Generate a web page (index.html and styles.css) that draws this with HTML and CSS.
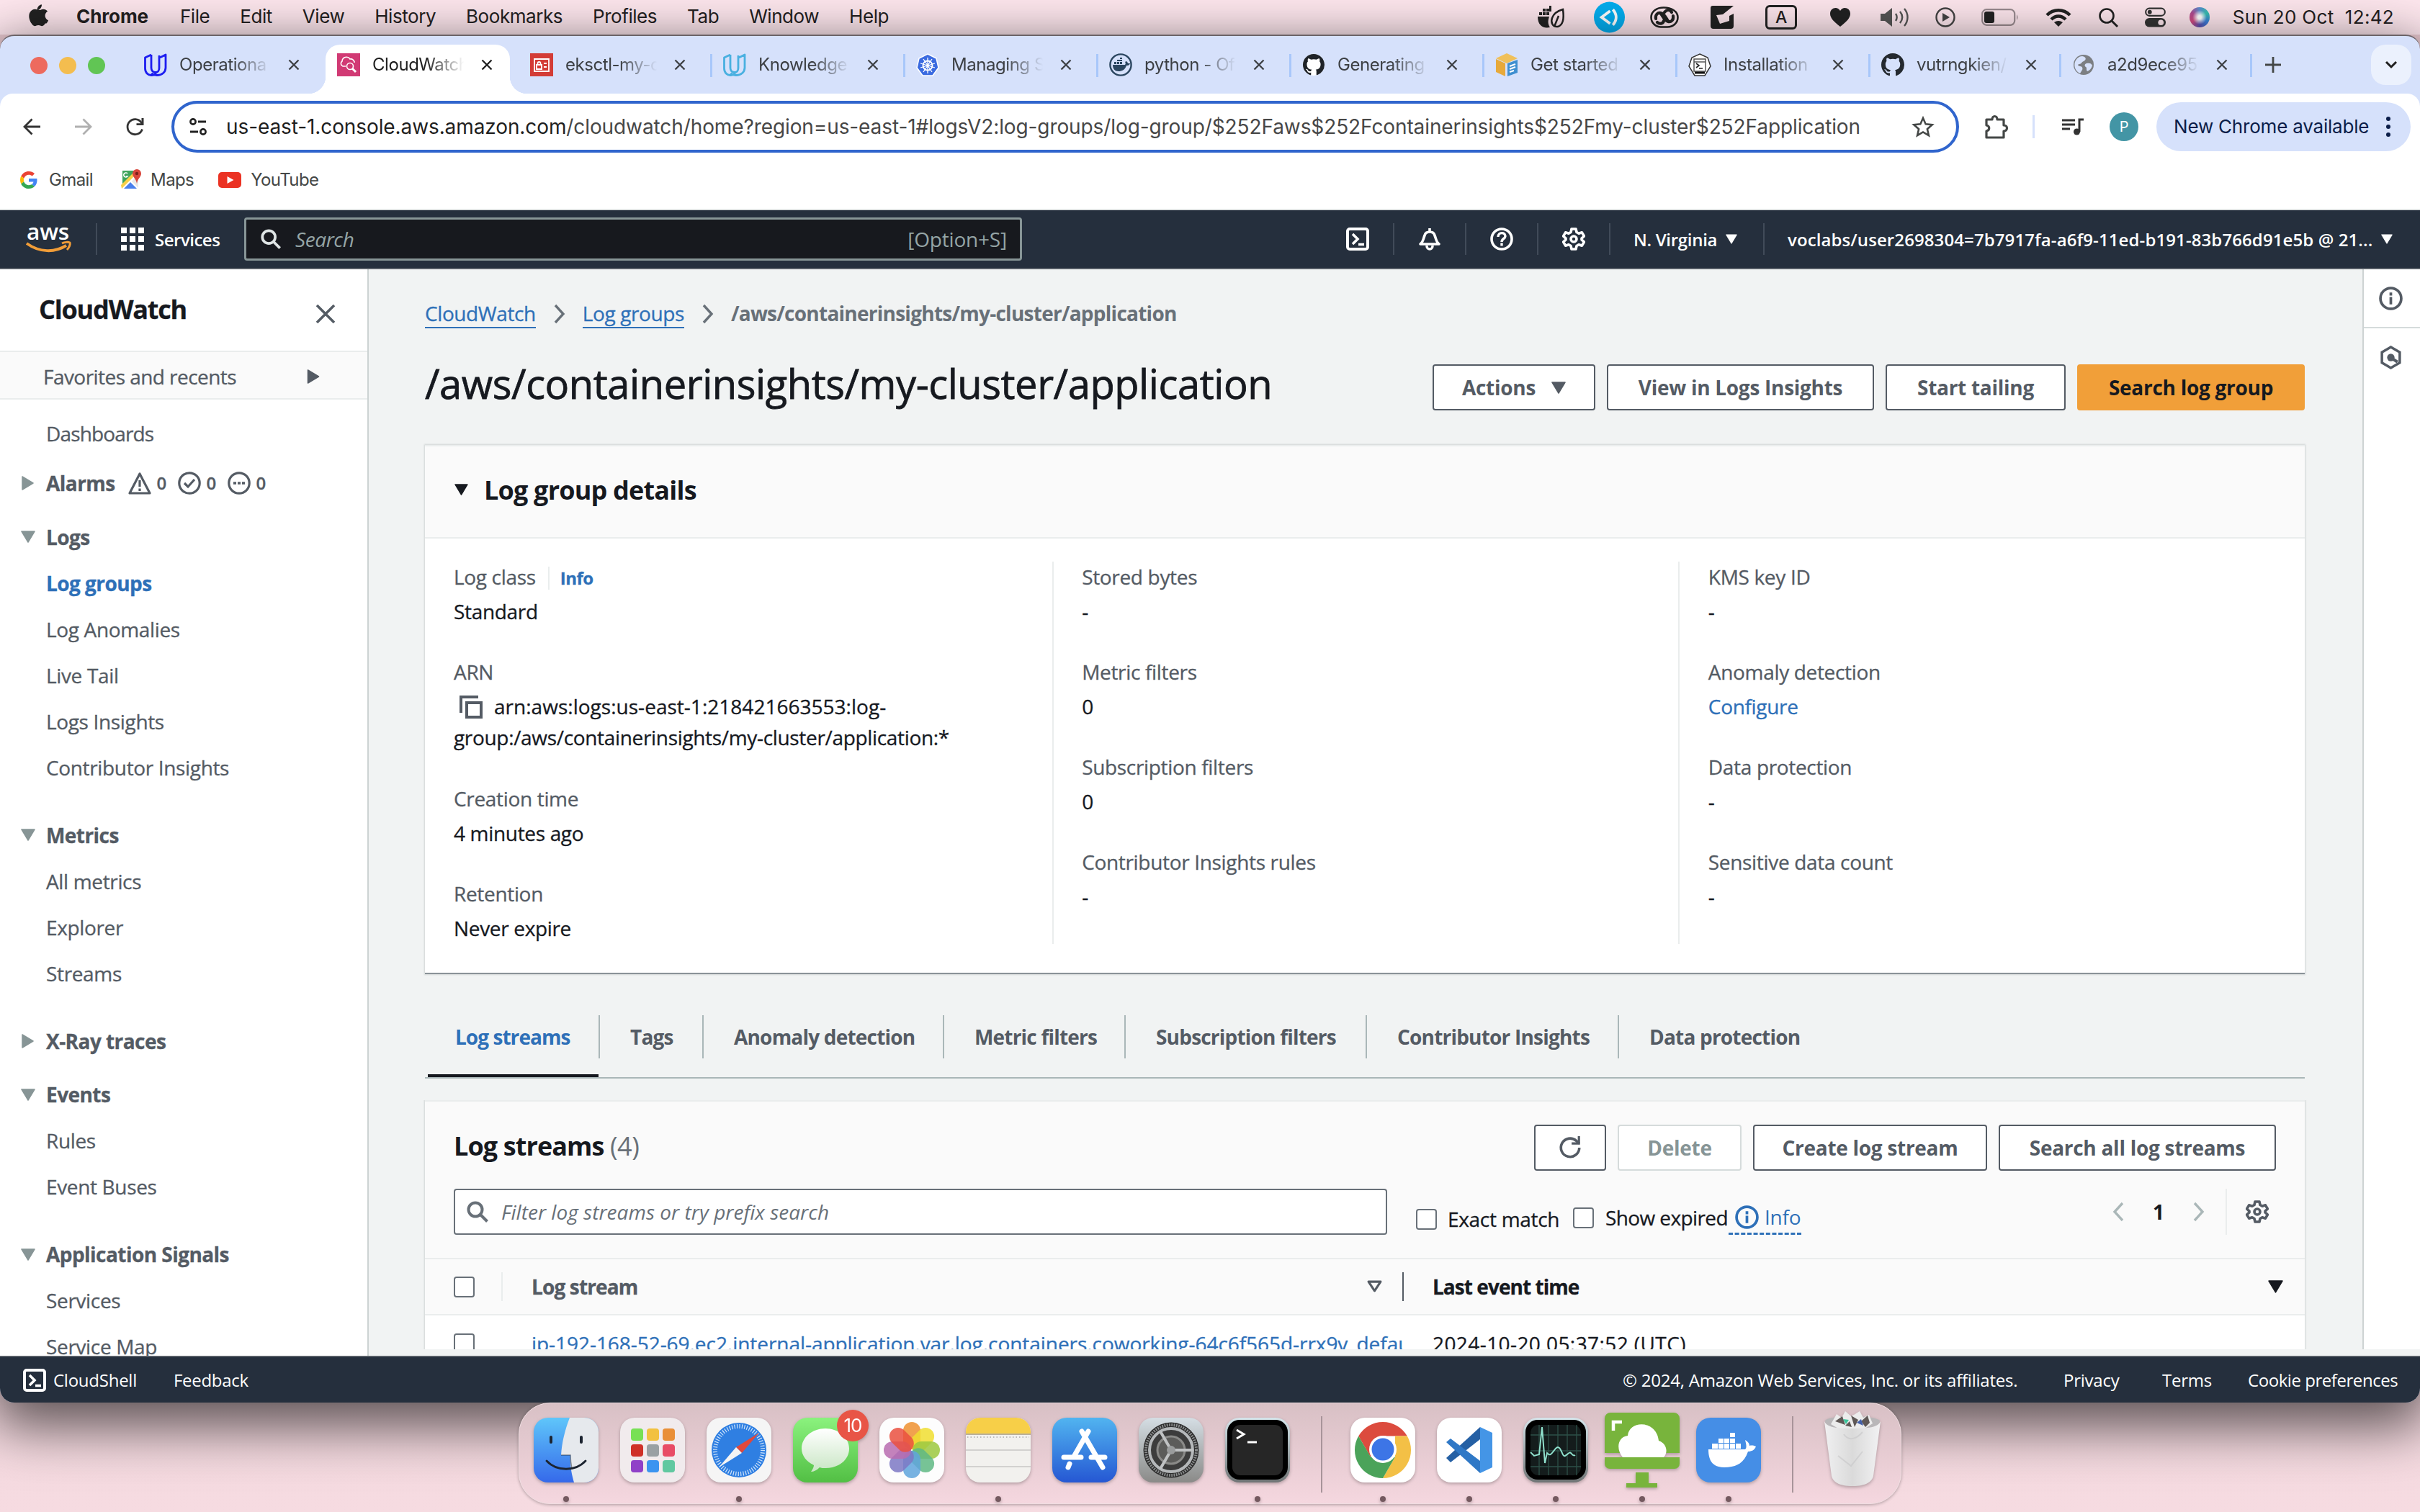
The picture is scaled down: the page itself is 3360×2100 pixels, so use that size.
FILE: index.html
```html
<!DOCTYPE html>
<html lang="en">
<head>
<meta charset="utf-8">
<title>CloudWatch</title>
<link rel="stylesheet" href="styles.css">
</head>
<body>
<svg class="defs" aria-hidden="true">
  <defs>
    <symbol id="x" viewBox="0 0 16 16"><path d="M1.5 1.5l13 13M14.5 1.5l-13 13" fill="none" stroke="currentColor" stroke-width="2.3"/></symbol>
    <symbol id="github" viewBox="0 0 16 16"><path fill="currentColor" d="M8 0C3.58 0 0 3.58 0 8c0 3.54 2.29 6.53 5.47 7.59.4.07.55-.17.55-.38 0-.19-.01-.82-.01-1.49-2.01.37-2.53-.49-2.69-.94-.09-.23-.48-.94-.82-1.13-.28-.15-.68-.52-.01-.53.63-.01 1.08.58 1.23.82.72 1.21 1.87.87 2.33.66.07-.52.28-.87.51-1.07-1.78-.2-3.64-.89-3.64-3.95 0-.87.31-1.59.82-2.15-.08-.2-.36-1.02.08-2.12 0 0 .67-.21 2.2.82.64-.18 1.32-.27 2-.27s1.36.09 2 .27c1.53-1.04 2.2-.82 2.2-.82.44 1.1.16 1.92.08 2.12.51.56.82 1.27.82 2.15 0 3.07-1.87 3.75-3.65 3.95.29.25.54.73.54 1.48 0 1.07-.01 1.93-.01 2.2 0 .21.15.46.55.38A8.01 8.01 0 0 0 16 8c0-4.42-3.58-8-8-8z"/></symbol>
    <symbol id="udacity" viewBox="0 0 32 32"><path d="M10 2L1.500 6v15c0 6 4 9.500 8.500 9.500 3.500 0 6-2 7-4M10 2v18c0 3.500 2 6.500 6 6.500 3 0 5-2.500 5-6V6.500L30 2v18c0 6-5 10.500-12 10.500-3 0-6-1-7.500-3M21 6.500V3" fill="none" stroke="currentColor" stroke-width="2.8" stroke-linejoin="round"/></symbol>
    <symbol id="search" viewBox="0 0 32 32"><circle cx="13" cy="13" r="9.500" fill="none" stroke="currentColor" stroke-width="4"/><path d="M19.500 19.500l10 10" stroke="currentColor" stroke-width="4"/></symbol>
    <symbol id="gear" viewBox="0 0 32 32"><path d="M13 2h6l1 4.500 3 1.700 4.400-1.400 3 5.200-3.400 3.100v1.800l3.400 3.100-3 5.200-4.400-1.400-3 1.700-1 4.500h-6l-1-4.500-3-1.700-4.400 1.400-3-5.200L5 16.900v-1.800L1.600 12l3-5.200L9 8.200l3-1.700z" fill="none" stroke="currentColor" stroke-width="3.600" stroke-linejoin="round"/><circle cx="16" cy="16" r="4" fill="none" stroke="currentColor" stroke-width="3.600"/></symbol>
    <symbol id="shell" viewBox="0 0 32 32"><rect x="2" y="2" width="28" height="28" rx="3" fill="none" stroke="currentColor" stroke-width="4"/><path d="M9 9l7 7-7 7M17 23.500h8" fill="none" stroke="currentColor" stroke-width="3.600"/></symbol>
    <symbol id="info" viewBox="0 0 32 32"><circle cx="16" cy="16" r="14" fill="none" stroke="currentColor" stroke-width="3.600"/><path d="M16 14v10M16 8v4" stroke="currentColor" stroke-width="3.600"/></symbol>
    <symbol id="down" viewBox="0 0 20 17"><path d="M1 1h18l-9 15z" fill="currentColor" stroke="currentColor" stroke-width="1.500" stroke-linejoin="round"/></symbol>
    <symbol id="right" viewBox="0 0 17 20"><path d="M1 1v18l15-9z" fill="currentColor" stroke="currentColor" stroke-width="1.500" stroke-linejoin="round"/></symbol>
    <symbol id="chev" viewBox="0 0 16 28"><path d="M2 2l11 12L2 26" fill="none" stroke="currentColor" stroke-width="3.400"/></symbol>
    <symbol id="reload" viewBox="0 0 32 32"><path d="M28 16a12 12 0 1 1-4-9l4 3.500" fill="none" stroke="currentColor" stroke-width="3.400"/><path d="M29 1v11H18l0-3h8V1z" fill="currentColor"/></symbol>
    <linearGradient id="g-term" x2="0" y2="1"><stop offset="0" stop-color="#d6e6ec"/><stop offset="1" stop-color="#6f7475"/></linearGradient>
  </defs>
</svg>

<header class="menubar">
  <nav class="menus">
    <svg class="apple" viewBox="0 0 170 200"><path fill="#222" d="M150 172c-8 12-17 24-30 24s-17-8-33-8-20 8-33 8-22-12-31-25C5 146-8 98 13 68c10-16 27-26 43-26s25 9 38 9c12 0 20-9 38-9 14 0 29 8 39 21-34 19-29 68 6 81-5 11-8 17-17 28zM117 0c2 13-3 25-10 34-7 10-19 17-31 17-2-13 4-25 10-33C94 8 107 1 117 0z"/></svg>
    <b>Chrome</b><span>File</span><span>Edit</span><span>View</span><span>History</span><span>Bookmarks</span><span>Profiles</span><span>Tab</span><span>Window</span><span>Help</span>
  </nav>
  <div class="status">
    <svg class="s1" viewBox="0 0 38 32"><path fill="#222" d="M1 15h16c-2 6-2 10 1 15-10 2-17-3-17-15zM3 9h4v4H3zM8 9h4v4H8zM13 9h4v4h-4zM8 4h4v4H8zM13 4h4v4h-4zM17 0h3v8h-3z"/><path d="M36 5c2 14 0 22-7 24-8 1-10-7-8-12 2-6 8-10 15-12zM30 14l-6 15" fill="none" stroke="#222" stroke-width="2.500"/></svg>
    <svg class="s2" viewBox="0 0 44 44"><circle cx="22" cy="22" r="22" fill="#03aef0"/><path d="M23 13L11 22l12 9M27 11c6 7 6 15 0 22" fill="none" stroke="#fff" stroke-width="4"/></svg>
    <svg class="s3" viewBox="0 0 40 30"><path d="M19 1.500C9 1.500 1.500 7 1.500 15S8 28.500 15 28.500h9C32 28.500 38.500 23 38.500 15S30 1.500 19 1.500z" fill="none" stroke="#222" stroke-width="2.600"/><path d="M8 17c-1-6 3-9 7-8 5 1 7 7 10 11M32 13c1 6-3 9-7 8-5-1-7-7-10-11M10 22c3 3 8 2 9-2M20 8c3-4 8-4 10 0" fill="none" stroke="#222" stroke-width="4.200" stroke-linecap="round"/></svg>
    <svg class="s4" viewBox="0 0 32 32"><path fill="#222" d="M3 0h29L17 12l-9 1 5 12 13-4 0-7 6-3v17a4 4 0 0 1-4 4H4a4 4 0 0 1-4-4V3a3 3 0 0 1 3-3z"/></svg>
    <span class="s5">A</span>
    <svg class="s6" viewBox="0 0 28 26"><path fill="#222" d="M14 26C5 19 0 14 0 8 0 0 10-3 14 4c4-7 14-4 14 4 0 6-5 11-14 18z"/></svg>
    <svg class="s7" viewBox="0 0 40 28"><path fill="#555" d="M0 9h6l10-8v26L6 19H0z"/><path d="M21 9c2 3 2 7 0 10M27 6c4 5 4 11 0 16M33 2c6 7 6 17 0 24" fill="none" stroke="#555" stroke-width="2.400"/></svg>
    <svg class="s8" viewBox="0 0 28 28"><circle cx="14" cy="14" r="12.500" fill="none" stroke="#444" stroke-width="2.400"/><path fill="#444" d="M10 8l10 6-10 6z"/></svg>
    <svg class="s9" viewBox="0 0 52 24"><rect x="1.200" y="1.200" width="45" height="21.600" rx="6" fill="none" stroke="#9a8b90" stroke-width="2.200"/><rect x="4" y="4" width="14" height="16" rx="3" fill="#222"/><path d="M49 8q3 4 0 8z" fill="#9a8b90"/></svg>
    <svg class="s10" viewBox="0 0 36 26"><path d="M2 10c9-9 23-9 32 0M8 16c6-6 14-6 20 0" fill="none" stroke="#222" stroke-width="4.500"/><path fill="#222" d="M12 20q6-4 12 0l-6 6z"/></svg>
    <svg class="s11" viewBox="0 0 27 27"><circle cx="11" cy="11" r="9.500" fill="none" stroke="#222" stroke-width="2.600"/><path d="M18 18l8 8" stroke="#222" stroke-width="3"/></svg>
    <svg class="s12" viewBox="0 0 30 28"><rect x="1.200" y="1.200" width="27.600" height="10.600" rx="5.300" fill="none" stroke="#333" stroke-width="2.200"/><circle cx="7" cy="6.500" r="3" fill="#333"/><rect y="15" width="30" height="13" rx="6.500" fill="#333"/><circle cx="23" cy="21.500" r="4" fill="#fee7ee"/></svg>
    <i class="siri"></i>
    <span class="clock">Sun 20 Oct&nbsp; 12:42</span>
  </div>
</header>

<div class="window">
  <div class="tabstrip">
    <div class="lights"><i></i><i></i><i></i></div>
    <div class="tab nodiv"><svg class="fav" color="#1d1df0"><use href="#udacity"/></svg><span>Operationa</span><svg class="close"><use href="#x"/></svg></div>
    <div class="tab active"><svg class="fav" viewBox="0 0 32 32"><rect width="32" height="32" fill="#d13a74"/><path d="M12 18H8a4 4 0 0 1-1-7 6 6 0 0 1 11-3 5 5 0 0 1 6 5" fill="none" stroke="#fff" stroke-width="1.600"/><circle cx="18" cy="18" r="4.500" fill="none" stroke="#fff" stroke-width="1.600"/><path d="M21 21l5 5" stroke="#fff" stroke-width="3"/></svg><span>CloudWatch</span><svg class="close"><use href="#x"/></svg></div>
    <div class="tab"><svg class="fav" viewBox="0 0 32 32"><rect width="32" height="32" fill="#d33c36"/><path d="M6 8h20v17H6zM9 16h7v6H9zM10.500 16v-2a2 2 0 0 1 4 0v2M19 14h4M19 19h4" fill="none" stroke="#fff" stroke-width="1.800"/></svg><span>eksctl-my-c</span><svg class="close"><use href="#x"/></svg></div>
    <div class="tab"><svg class="fav" color="#49b0e0"><use href="#udacity"/></svg><span>Knowledge</span><svg class="close"><use href="#x"/></svg></div>
    <div class="tab"><svg class="fav" viewBox="0 0 32 32"><path d="M16 1l12 6 3 13-8 11H9L1 20 4 7z" fill="#3b6be0" stroke="#fff" stroke-width="1.500"/><circle cx="16" cy="17" r="6.500" fill="none" stroke="#fff" stroke-width="2"/><path d="M16 6v22M6 14l20 6M6 20l20-6M10 26l12-18M22 26L10 8" stroke="#fff" stroke-width="1.300"/></svg><span>Managing S</span><svg class="close"><use href="#x"/></svg></div>
    <div class="tab"><svg class="fav" viewBox="0 0 32 32"><circle cx="16" cy="16" r="14.600" fill="none" stroke="#2b4660" stroke-width="2.400"/><path fill="#2b4660" d="M5 16h17c1-1 1-3 0-4l2-1c1 1 2 2 2 3h3c-1 3-3 3-5 3-2 6-6 8-11 8-5 0-8-3-8-9zM7 12h3v3H7zM11 12h3v3h-3zM15 12h3v3h-3zM11 9h7v2h-7zM15 6h3v2h-3z"/></svg><span>python - Of</span><svg class="close"><use href="#x"/></svg></div>
    <div class="tab"><svg class="fav" color="#1f2328" viewBox="0 0 32 32"><circle cx="16" cy="16" r="15" fill="#fff"/><use href="#github" x="1" y="1" width="30" height="30"/></svg><span>Generating</span><svg class="close"><use href="#x"/></svg></div>
    <div class="tab"><svg class="fav" viewBox="0 0 32 32"><path fill="#f0c05a" d="M1 7L16 0l15 7-15 7z"/><path fill="#e7a93a" d="M1 8l13 6v18L1 26z"/><path fill="#3f8fd0" d="M17 14l14-5v18l-14 5z"/><path d="M20 18l8-3M20 22l8-3M20 26l6-2" stroke="#fff" stroke-width="2.200"/></svg><span>Get started</span><svg class="close"><use href="#x"/></svg></div>
    <div class="tab"><svg class="fav" viewBox="0 0 32 32"><path d="M16 1l11 5 4 12-8 13H9L1 18 5 6z" fill="#fff" stroke="#333" stroke-width="1.500"/><path d="M8 8h16v17H8zM8 12h16" fill="none" stroke="#555" stroke-width="1.500"/><path d="M11 14l4 3-4 3M15 21h5" fill="none" stroke="#222" stroke-width="1.600"/><path d="M9 27h14" stroke="#111" stroke-width="3"/></svg><span>Installation</span><svg class="close"><use href="#x"/></svg></div>
    <div class="tab last2"><svg class="fav" color="#24292f"><use href="#github"/></svg><span>vutrngkien/</span><svg class="close"><use href="#x"/></svg></div>
    <div class="tab last"><svg class="fav" viewBox="0 0 32 32"><circle cx="16" cy="16" r="14" fill="#7c7f83"/><path fill="#d6e1fb" d="M14 4c6 1 6 5 2 7-3 1-3 4-6 4s-2 3 1 3 4 3 3 5-2 3-3 5C5 25 2 19 4 12c2-5 6-8 10-8zM20 14c4-1 7 0 8 3-1 4-4 7-7 8-2-2 0-5-2-6s-2-4 1-5z"/></svg><span>a2d9ece95</span><svg class="close"><use href="#x"/></svg></div>
    <svg class="plus" viewBox="0 0 22 22"><path d="M11 0v22M0 11h22" stroke="#444746" stroke-width="2.800"/></svg>
    <div class="tabmenu"><svg viewBox="0 0 18 12"><path d="M2 2l7 7 7-7" fill="none" stroke="#1f1f1f" stroke-width="3"/></svg></div>
  </div>

  <div class="toolbar">
    <svg class="back" viewBox="0 0 24 24"><path d="M24 12H2M12.500 1.500L2 12l10.500 10.500" fill="none" stroke="#333" stroke-width="2.800"/></svg>
    <svg class="fwd" viewBox="0 0 24 24"><path d="M0 12h22M11.500 1.500L22 12 11.500 22.500" fill="none" stroke="#b0b0b0" stroke-width="2.800"/></svg>
    <svg class="rel" viewBox="0 0 24 24"><path d="M21.500 15.500A10.500 10.500 0 1 1 20 6l2 3" fill="none" stroke="#333" stroke-width="2.800"/><path d="M23.500 0v10h-10V7.200h7V0z" fill="#333"/></svg>
    <div class="omni">
      <svg class="tune" viewBox="0 0 26 24"><circle cx="6" cy="5" r="3.600" fill="none" stroke="#222" stroke-width="2.600"/><circle cx="20" cy="19" r="3.600" fill="none" stroke="#222" stroke-width="2.600"/><path d="M13 5h11M2 19h11" stroke="#222" stroke-width="2.800"/></svg>
      <span class="url"><em>us-east-1.console.aws.amazon.com</em>/cloudwatch/home?region=us-east-1#logsV2:log-groups/log-group/$252Faws$252Fcontainerinsights$252Fmy-cluster$252Fapplication</span>
      <svg class="star" viewBox="0 0 30 30"><path d="M15 3l3.700 8.400 9 .9-6.800 6 2 8.900-7.900-4.700-7.900 4.700 2-8.900-6.800-6 9-.9z" fill="none" stroke="#444746" stroke-width="2.600"/></svg>
    </div>
    <svg class="puz" viewBox="0 0 34 34"><path d="M3 7h8c0-6 7-6 7 0h9v8c6 0 6 8 0 8v9H3v-9c5-1 5-7 0-8z" fill="none" stroke="#444746" stroke-width="3.200" stroke-linejoin="round"/></svg>
    <i class="tdiv"></i>
    <svg class="music" viewBox="0 0 30 24"><path d="M0 3h18M0 9h18M0 15h11M24 19V2h6" fill="none" stroke="#333" stroke-width="3"/><circle cx="20.500" cy="19" r="4.500" fill="#333"/></svg>
    <span class="avatar">P</span>
    <div class="update">New Chrome available<svg viewBox="0 0 6 28"><circle cx="3" cy="3" r="3"/><circle cx="3" cy="14" r="3"/><circle cx="3" cy="25" r="3"/></svg></div>
  </div>

  <div class="bookmarks">
    <svg class="bg" viewBox="0 0 48 48"><path fill="#ea4335" d="M24 9.500c3.540 0 6.710 1.220 9.210 3.600l6.850-6.850C35.900 2.380 30.470 0 24 0 14.620 0 6.510 5.380 2.560 13.220l7.980 6.190C12.430 13.720 17.740 9.500 24 9.500z"/><path fill="#4285f4" d="M46.980 24.550c0-1.570-.15-3.090-.38-4.550H24v9.020h12.940c-.58 2.960-2.260 5.480-4.780 7.180l7.730 6c4.510-4.180 7.090-10.360 7.090-17.650z"/><path fill="#fbbc05" d="M10.530 28.590A14.500 14.500 0 0 1 9.770 24c0-1.600.27-3.140.76-4.590l-7.980-6.190A24 24 0 0 0 0 24c0 3.880.92 7.540 2.560 10.780z"/><path fill="#34a853" d="M24 48c6.480 0 11.930-2.130 15.890-5.810l-7.730-6c-2.150 1.450-4.920 2.300-8.160 2.300-6.260 0-11.570-4.220-13.470-9.910l-7.980 6.190C6.510 42.620 14.620 48 24 48z"/></svg>
    <span>Gmail</span>
    <svg class="bm" viewBox="0 0 28 28"><path fill="#3fa45b" d="M2 2h20L2 24z"/><path fill="#e8e8e8" d="M24 6v20l-9-9z"/><path fill="#f8d048" d="M0 22L18 4l3 3L1 27z"/><path fill="#4a80ec" d="M4 27l9-9 9 9z"/><path fill="#d8453a" d="M22 0a6 6 0 0 1 6 6c0 5-5 7-6 14-1-7-6-9-6-14a6 6 0 0 1 6-6z"/><circle cx="22" cy="6" r="2.200" fill="#7d2018"/><path d="M9 6a3 3 0 1 0 0 4H7" fill="none" stroke="#fff" stroke-width="1.500"/></svg>
    <span>Maps</span>
    <svg class="by" viewBox="0 0 32 22"><rect width="32" height="22" rx="5" fill="#eb3223"/><path fill="#fff" d="M12.500 6l9 5-9 5z"/></svg>
    <span>YouTube</span>
  </div>

  <div class="awsbar">
    <svg class="awslogo" viewBox="0 0 64 40"><text x="1" y="20.500" font-family="Open Sans, sans-serif" font-size="30" font-weight="600" fill="#fff" textLength="59" lengthAdjust="spacingAndGlyphs">aws</text><path d="M1 26c18 13 39 13 55 3" fill="none" stroke="#f19d38" stroke-width="4"/><path d="M50 26c4-2 9-2 11-1 1 2-1 7-4 10" fill="none" stroke="#f19d38" stroke-width="3"/></svg>
    <i class="adiv a1"></i>
    <svg class="grid9" viewBox="0 0 32 32"><path fill="#fff" d="M0 0h8v8H0zM12 0h8v8h-8zM24 0h8v8h-8zM0 12h8v8H0zM12 12h8v8h-8zM24 12h8v8h-8zM0 24h8v8H0zM12 24h8v8h-8zM24 24h8v8h-8z"/></svg>
    <span class="services">Services</span>
    <div class="awssearch"><svg><use href="#search"/></svg><em>Search</em><span>[Option+S]</span></div>
    <div class="awsicons">
      <svg class="ic"><use href="#shell"/></svg><i class="adiv"></i>
      <svg class="ic" viewBox="0 0 32 32"><path d="M16 1v4M3 23c4-3 4-7 6-12 1-4 4-5 7-5s6 1 7 5c2 5 2 9 6 12z" fill="none" stroke="#fff" stroke-width="3.600" stroke-linejoin="round"/><path d="M12 25v1a4 4 0 0 0 8 0v-1" fill="none" stroke="#fff" stroke-width="3.400"/></svg><i class="adiv"></i>
      <svg class="ic" viewBox="0 0 32 32"><circle cx="16" cy="16" r="14" fill="none" stroke="#fff" stroke-width="3.600"/><path d="M11 13c0-7 10-7 10-1 0 4-5 3-5 8M16 21.500v4" fill="none" stroke="#fff" stroke-width="3.400"/></svg><i class="adiv"></i>
      <svg class="ic"><use href="#gear"/></svg><i class="adiv"></i>
    </div>
    <span class="region">N. Virginia<svg><use href="#down"/></svg></span><i class="adiv"></i>
    <span class="account">voclabs/user2698304=7b7917fa-a6f9-11ed-b191-83b766d91e5b @ 21...<svg><use href="#down"/></svg></span>
  </div>

  <div class="content">
    <aside class="side">
      <div class="sidehead"><b>CloudWatch</b><svg viewBox="0 0 28 28"><path d="M2 2l24 24M26 2L2 26" fill="none" stroke="#545b64" stroke-width="3.600"/></svg></div>
      <div class="favs">Favorites and recents<svg><use href="#right"/></svg></div>
      <ul>
        <li>Dashboards</li>
        <li class="grp alarms"><svg class="tr"><use href="#right"/></svg>Alarms
          <svg class="ai" viewBox="0 0 32 32"><path d="M16 3L2 30h28z" fill="none" stroke="#545b64" stroke-width="3.200" stroke-linejoin="round"/><path d="M16 12v9M16 23.500v3.500" stroke="#545b64" stroke-width="3.200"/></svg><small>0</small>
          <svg class="ai" viewBox="0 0 32 32"><circle cx="16" cy="16" r="14.200" fill="none" stroke="#545b64" stroke-width="3.200"/><path d="M9 16l5 5 9-10" fill="none" stroke="#545b64" stroke-width="3.200"/></svg><small>0</small>
          <svg class="ai" viewBox="0 0 32 32"><circle cx="16" cy="16" r="14.200" fill="none" stroke="#545b64" stroke-width="3.200"/><path d="M8 16h16" stroke="#545b64" stroke-width="3.600" stroke-dasharray="4 2"/></svg><small>0</small></li>
        <li class="grp m11"><svg class="td"><use href="#down"/></svg>Logs</li>
        <li class="on">Log groups</li><li>Log Anomalies</li><li>Live Tail</li><li>Logs Insights</li><li>Contributor Insights</li>
        <li class="grp m30"><svg class="td"><use href="#down"/></svg>Metrics</li>
        <li>All metrics</li><li>Explorer</li><li>Streams</li>
        <li class="grp m30"><svg class="tr"><use href="#right"/></svg>X-Ray traces</li>
        <li class="grp m11"><svg class="td"><use href="#down"/></svg>Events</li>
        <li>Rules</li><li>Event Buses</li>
        <li class="grp m30"><svg class="td"><use href="#down"/></svg>Application Signals</li>
        <li>Services</li><li>Service Map</li>
      </ul>
    </aside>

    <main class="main">
      <div class="crumbs"><a>CloudWatch</a><svg><use href="#chev"/></svg><a>Log groups</a><svg><use href="#chev"/></svg><b>/aws/containerinsights/my-cluster/application</b></div>
      <div class="titlerow">
        <h1>/aws/containerinsights/my-cluster/application</h1>
        <div class="btns"><span class="btn w1">Actions<svg><use href="#down"/></svg></span><span class="btn w2">View in Logs Insights</span><span class="btn w3">Start tailing</span><span class="btn primary">Search log group</span></div>
      </div>

      <section class="panel details">
        <h2><svg><use href="#down"/></svg>Log group details</h2>
        <div class="cols">
          <dl>
            <dt>Log class<span class="inf">Info</span></dt><dd>Standard</dd>
            <dt>ARN</dt><dd><svg class="copy" viewBox="0 0 32 32"><path d="M2 24V2h24" fill="none" stroke="#545b64" stroke-width="4"/><rect x="10" y="10" width="20" height="20" fill="none" stroke="#545b64" stroke-width="4"/></svg><span class="arn">arn:aws:logs:us-east-1:218421663553:log-</span><br>group:/aws/containerinsights/my-cluster/application:*</dd>
            <dt>Creation time</dt><dd>4 minutes ago</dd>
            <dt>Retention</dt><dd>Never expire</dd>
          </dl>
          <dl>
            <dt>Stored bytes</dt><dd>-</dd><dt>Metric filters</dt><dd>0</dd><dt>Subscription filters</dt><dd>0</dd><dt>Contributor Insights rules</dt><dd>-</dd>
          </dl>
          <dl>
            <dt>KMS key ID</dt><dd>-</dd><dt>Anomaly detection</dt><dd class="link">Configure</dd><dt>Data protection</dt><dd>-</dd><dt>Sensitive data count</dt><dd>-</dd>
          </dl>
        </div>
      </section>

      <nav class="tabs"><span class="cur">Log streams</span><span>Tags</span><span>Anomaly detection</span><span>Metric filters</span><span>Subscription filters</span><span>Contributor Insights</span><span>Data protection</span></nav>

      <section class="panel streams">
        <div class="shead">
          <h2>Log streams <i>(4)</i></h2>
          <div class="btns"><span class="btn r1"><svg><use href="#reload"/></svg></span><span class="btn r2">Delete</span><span class="btn r3">Create log stream</span><span class="btn r4">Search all log streams</span></div>
        </div>
        <div class="filter">
          <div class="finput"><svg><use href="#search"/></svg>Filter log streams or try prefix search</div>
          <i class="box b1"></i><span class="exact">Exact match</span>
          <i class="box b2"></i><span class="expired">Show expired</span>
          <span class="dinfo"><svg><use href="#info"/></svg>Info</span>
          <div class="pager"><svg class="flip"><use href="#chev"/></svg><b>1</b><svg><use href="#chev"/></svg><i></i><svg class="pg"><use href="#gear"/></svg></div>
        </div>
        <div class="trow thead"><i class="box"></i><i class="v"></i><b class="c1">Log stream<svg viewBox="0 0 20 17"><path d="M2 2h16l-8 12z" fill="none" stroke="#545b64" stroke-width="3" stroke-linejoin="round"/></svg></b><b class="c2">Last event time<svg><use href="#down"/></svg></b></div>
        <div class="trow"><i class="box"></i><i class="v none"></i><span class="c1 link">ip-192-168-52-69.ec2.internal-application.var.log.containers.coworking-64c6f565d-rrx9v_defau</span><span class="c2">2024-10-20 05:37:52 (UTC)</span></div>
      </section>
    </main>

    <aside class="rail"><div><svg><use href="#info"/></svg></div><div class="hex"><svg viewBox="0 0 32 32"><path d="M16 2l12 7v14l-12 7-12-7V9z" fill="none" stroke="#545b64" stroke-width="3.400"/><circle cx="16" cy="16" r="5" fill="#545b64"/><path d="M17 17l8 5" stroke="#545b64" stroke-width="4"/></svg></div></aside>
  </div>

  <footer class="foot"><svg><use href="#shell"/></svg><span class="f1">CloudShell</span><span class="f2">Feedback</span><span class="f3">© 2024, Amazon Web Services, Inc. or its affiliates.</span><span class="f4">Privacy</span><span class="f5">Terms</span><span class="f6">Cookie preferences</span></footer>
</div>

<div class="dock">
  <div class="app dot"><svg viewBox="0 0 90 90"><defs><linearGradient id="g-find" x2="0" y2="1"><stop offset="0" stop-color="#5fc6fa"/><stop offset="1" stop-color="#3569ea"/></linearGradient><clipPath id="c-r"><rect width="90" height="90" rx="20"/></clipPath></defs><g clip-path="url(#c-r)"><rect width="90" height="90" fill="url(#g-find)"/><path d="M50 0C43 18 39 35 38 52h13c-1 14 2 28 5 38h34V0z" fill="#e6e9ed"/></g><path d="M24 27v7M66 27v7" stroke="#1c2430" stroke-width="4" stroke-linecap="round"/><path d="M18 60c14 15 40 15 54 0" fill="none" stroke="#1c2430" stroke-width="2.800" stroke-linecap="round"/><path d="M38 52h13c0 8 1 14 2 19" fill="none" stroke="#1c2430" stroke-width="1.500" stroke-opacity=".5"/></svg></div>
  <div class="app"><svg viewBox="0 0 90 90"><rect width="90" height="90" rx="20" fill="#f1ebed"/><g><rect x="15" y="15" width="17" height="17" rx="4" fill="#78e055"/><rect x="37" y="15" width="17" height="17" rx="4" fill="#f2c140"/><rect x="59" y="15" width="17" height="17" rx="4" fill="#e98f38"/><rect x="15" y="37" width="17" height="17" rx="4" fill="#cf3128"/><rect x="37" y="37" width="17" height="17" rx="4" fill="#9aa0a3"/><rect x="59" y="37" width="17" height="17" rx="4" fill="#e84c66"/><rect x="15" y="59" width="17" height="17" rx="4" fill="#9040c8"/><rect x="37" y="59" width="17" height="17" rx="4" fill="#3b94f0"/><rect x="59" y="59" width="17" height="17" rx="4" fill="#60c8a0"/></g></svg></div>
  <div class="app dot"><svg viewBox="0 0 90 90"><rect width="90" height="90" rx="20" fill="#f5f5f5"/><circle cx="45" cy="45" r="38" fill="#2f7fe2"/><circle cx="45" cy="45" r="33" fill="none" stroke="#cfe4fa" stroke-width="6" stroke-dasharray="1.200 2.260"/><path d="M73 21L49 49l-8-8z" fill="#e0483c"/><path d="M17 69l24-28 8 8z" fill="#f4f4f4"/></svg></div>
  <div class="app"><svg viewBox="0 0 90 90"><defs><linearGradient id="g-msg" x2="0" y2="1"><stop offset="0" stop-color="#8bf27e"/><stop offset="1" stop-color="#52bf44"/></linearGradient><linearGradient id="g-bub" x2="0" y2="1"><stop offset="0" stop-color="#fff"/><stop offset="1" stop-color="#c9e6c4"/></linearGradient></defs><rect width="90" height="90" rx="20" fill="url(#g-msg)"/><path d="M45 15c18 0 33 12 33 28S63 70 45 70c-3 0-6 0-8-1-4 4-8 6-12 6 2-3 4-6 4-9-10-5-17-13-17-23 0-16 15-28 33-28z" fill="url(#g-bub)"/></svg><span class="badge">10</span></div>
  <div class="app"><svg viewBox="0 0 90 90"><rect width="90" height="90" rx="20" fill="#fdfdfd"/><g fill-opacity=".85"><rect x="33" y="6" width="24" height="38" rx="12" fill="#ef9030"/><rect x="33" y="6" width="24" height="38" rx="12" fill="#f0de30" transform="rotate(45 45 45)"/><rect x="33" y="6" width="24" height="38" rx="12" fill="#9cc840" transform="rotate(90 45 45)"/><rect x="33" y="6" width="24" height="38" rx="12" fill="#5fb884" transform="rotate(135 45 45)"/><rect x="33" y="6" width="24" height="38" rx="12" fill="#5fa4dc" transform="rotate(180 45 45)"/><rect x="33" y="6" width="24" height="38" rx="12" fill="#7c78c4" transform="rotate(225 45 45)"/><rect x="33" y="6" width="24" height="38" rx="12" fill="#b86cb0" transform="rotate(270 45 45)"/><rect x="33" y="6" width="24" height="38" rx="12" fill="#ea5040" transform="rotate(315 45 45)"/></g></svg></div>
  <div class="app dot"><svg viewBox="0 0 90 90"><g clip-path="url(#c-r)"><rect width="90" height="90" fill="#f2f1ee"/><rect width="90" height="22" fill="#f7cf48"/></g><path d="M0 23h90" stroke="#b9b09a" stroke-width="2"/><path d="M2 27h86" stroke="#bbb" stroke-width="2" stroke-dasharray="1.500 3"/><path d="M0 45h90M0 68h90" stroke="#d2d1cf" stroke-width="2"/></svg></div>
  <div class="app"><svg viewBox="0 0 90 90"><defs><linearGradient id="g-as" x2="0" y2="1"><stop offset="0" stop-color="#51b4f0"/><stop offset="1" stop-color="#2557d3"/></linearGradient></defs><rect width="90" height="90" rx="20" fill="url(#g-as)"/><path d="M50 19L30 54M41 19l29 50M16 55h24M54 55h19M24 64l-2 5" stroke="#fff" stroke-width="7" stroke-linecap="round"/></svg></div>
  <div class="app"><svg viewBox="0 0 90 90"><defs><linearGradient id="g-set" x2="0" y2="1"><stop offset="0" stop-color="#d5dee4"/><stop offset="1" stop-color="#8a8a88"/></linearGradient></defs><rect width="90" height="90" rx="20" fill="url(#g-set)"/><circle cx="45" cy="45" r="38.500" fill="#2c2c2c"/><circle cx="45" cy="45" r="35" fill="none" stroke="#8a8c8d" stroke-width="4" stroke-dasharray="1.800 1.500"/><circle cx="45" cy="45" r="30" fill="#3c3c3c" stroke="#b5b8ba" stroke-width="4"/><circle cx="45" cy="45" r="19" fill="#5c5c5a" stroke="#8a8a88" stroke-width="3"/><path d="M45 45h30M45 45L30 19M45 45L30 71" stroke="#c0c2c3" stroke-width="4"/><circle cx="45" cy="45" r="6" fill="#9a9c9c"/></svg></div>
  <div class="app dot"><svg viewBox="0 0 90 90"><rect width="90" height="90" rx="20" fill="url(#g-term)"/><rect x="3" y="3" width="84" height="83" rx="17" fill="#000"/><rect x="10" y="10" width="70" height="70" rx="11" fill="#262626"/><path d="M16 17l10 6-10 6M31 34h13" fill="none" stroke="#fff" stroke-width="3"/></svg></div>
  <i class="ddiv"></i>
  <div class="app dot"><svg viewBox="0 0 90 90"><rect width="90" height="90" rx="20" fill="#fff"/><path d="M11.200 25.500a39 39 0 0 1 67.600 0H45L28 55z" fill="#dc4b3e"/><path d="M78.800 25.500A39 39 0 0 1 45 84l17-29.500L62 25.500z" fill="#f3c046"/><path d="M11.200 25.500A39 39 0 0 0 45 84l17-29.500H28z" fill="#4ba35a"/><circle cx="45" cy="44" r="19" fill="#fff"/><circle cx="45" cy="44" r="15.500" fill="#3d75e6"/></svg></div>
  <div class="app dot"><svg viewBox="0 0 90 90"><rect width="90" height="90" rx="20" fill="#fff"/><path d="M60 13L13 56l6 6 41-32z" fill="#2560a4"/><path d="M19 29l-6 5 47 43V60z" fill="#2f78c6"/><path d="M60 13l17 8v48l-17 8z" fill="#4495e6"/></svg></div>
  <div class="app dot"><svg viewBox="0 0 90 90"><rect width="90" height="90" rx="20" fill="url(#g-term)"/><rect x="3" y="3" width="84" height="83" rx="17" fill="#000"/><rect x="10" y="10" width="70" height="70" rx="11" fill="#141c1c"/><path d="M22 10v70M35 10v70M48 10v70M61 10v70M74 10v70M10 24h70M10 46h70M10 68h70" stroke="#2d5048" stroke-width="1.300"/><path d="M10 48l5 5 7-2 4-38 4 50 3-14c6 8 10-8 15-8s6 14 10 12 6-6 8-4 3 5 6 3" fill="none" stroke="#8fe0cc" stroke-width="2"/></svg></div>
  <div class="app dot"><svg class="big" viewBox="0 0 104 104"><path d="M8 0h88a8 8 0 0 1 8 8v48H0V8a8 8 0 0 1 8-8zM0 62h104v9a7 7 0 0 1-7 7H7a7 7 0 0 1-7-7zM43 83h18v15h12v6H30v-6h13z" fill="#78b43c"/><path d="M12 25V13h12" fill="none" stroke="#fff" stroke-width="4.500"/><path d="M25 62C16 52 17 34 32 32c2-22 40-22 43 7 12 4 13 17 7 23z" fill="#fff"/></svg></div>
  <div class="app dot"><svg viewBox="0 0 90 90"><rect width="90" height="90" rx="20" fill="#458ee6"/><path d="M17 44h51c3-2 1-9 0-13 4 2 6 5 6 8 4-1 7 0 9 1-2 5-6 7-11 7-5 15-15 22-33 22-15 0-22-8-22-25zM22 36h8v7h-8zM31 36h7v7h-7zM39 36h7v7h-7zM47 36h7v7h-7zM55 36h7v7h-7zM31 29h7v6h-7zM39 29h7v6h-7zM47 29h7v6h-7zM47 21h7v6h-7z" fill="#fff"/></svg></div>
  <i class="ddiv"></i>
  <div class="app trash"><svg viewBox="0 0 80 105"><defs><linearGradient id="g-tr"><stop offset="0" stop-color="#f0f0f1"/><stop offset=".5" stop-color="#dadada"/><stop offset="1" stop-color="#f2f2f3"/></linearGradient></defs><path d="M2 13c0 5 5 10 15 10h46c10 0 15-5 15-10C70 5 8 5 2 13z" fill="#b9b7b9"/><path d="M10 18l8-14 7 5 5-9 8 7 4-2 8-5 5 9 8-4 5 12-12 8H22z" fill="#ececec"/><path d="M16 14l10-7 4 12zM38 6l10 6-5 10zM52 14l9-8 3 10-6 6zM30 20l6-6 3 8z" fill="#5f5856"/><path d="M27 11l8 1-4 6z" fill="#3cc49a"/><path d="M46 16l6-5 3 9z" fill="#4460a8"/><path d="M1 14c3 7 12 10 39 10s36-3 39-10L69 90c-2 8-10 14-29 14S13 98 11 90z" fill="url(#g-tr)"/><path d="M28 32c8 12 20 4 26-3M20 62l18 14 16-20" fill="none" stroke="#c6c6c8" stroke-width="2" opacity=".6"/></svg></div>
</div>
</body>
</html>
```
FILE: styles.css
```css
*{box-sizing:border-box}
html,body{margin:0;width:3360px;height:2100px;overflow:hidden}
body{background:linear-gradient(#e9c9d0,#f6dbe1);font-family:"Open Sans","Noto Sans",sans-serif;font-size:28px;color:#16191f;letter-spacing:-.25px;display:flex;flex-direction:column}
svg{display:block;flex:none;overflow:visible}
.defs{position:absolute;width:0;height:0}
i{font-style:normal;flex:none}
span,b,a{white-space:nowrap}

/* macOS menu bar */
.menubar{height:48px;flex:none;background:#fee7ee;display:flex;justify-content:space-between;font:26px/46px Inter,sans-serif;letter-spacing:-.45px;color:#232021}
.menus{display:flex;gap:42px;padding-left:40px}
.menus b{margin:0 2px 0 -2px;letter-spacing:-.1px}
.apple{width:26px;height:31px;margin-top:6px}
.status{display:flex;align-items:center;padding-right:36px}
.s1{width:38px;height:32px}
.s2{width:43px;height:44px;margin-left:41px}
.s3{width:40px;height:30px;margin-left:35px}
.s4{width:32px;height:32px;margin-left:44px}
.s5{width:44px;height:34px;border:3px solid #222;border-radius:6px;margin-left:44px;text-align:center;line-height:28px;font-size:23px;font-weight:500}
.s6{width:28px;height:26px;margin-left:46px}
.s7{width:40px;height:28px;margin-left:42px}
.s8{width:28px;height:28px;margin-left:36px}
.s9{width:52px;height:24px;margin-left:36px}
.s10{width:36px;height:26px;margin-left:37px}
.s11{width:27px;height:27px;margin-left:38px}
.s12{width:29px;height:28px;margin-left:37px}
.siri{width:28px;height:28px;border-radius:50%;margin-left:33px;background:radial-gradient(circle,#fff 0 12%,transparent 50%),conic-gradient(#5a8fd0,#35c0b0,#3a7fd8,#5a50b0,#d04a80,#b04a90,#5a8fd0)}
.clock{margin-left:32px;letter-spacing:.32px}

/* browser window */
.window{height:1900px;flex:none;border-radius:20px;overflow:hidden;background:#d6e1fb;border-top:2px solid #6b6368;display:flex;flex-direction:column;box-shadow:0 24px 76px 10px rgba(0,0,0,.62)}
.tabstrip{height:80px;flex:none;display:flex;align-items:flex-start;padding-left:42px;font:24px/78px Inter,sans-serif;letter-spacing:-.45px;color:#3c3f43}
.lights{display:flex;gap:16px;margin-top:29px;width:143px;flex:none}
.lights i{width:24px;height:24px;border-radius:50%;background:#ed6a5e}
.lights i:nth-child(2){background:#f4bd4f}
.lights i:nth-child(3){background:#61c554}
.tab{position:relative;width:268px;height:80px;flex:none;display:flex;align-items:center;padding-left:15px}
.last2{width:265px}
.last{width:265px}
.tab span{line-height:78px;margin-left:17px;width:130px;overflow:hidden;-webkit-mask-image:linear-gradient(90deg,#000 58%,transparent 98%);mask-image:linear-gradient(90deg,#000 58%,transparent 98%)}
.fav{width:32px;height:32px}
.close{width:16px;height:16px;margin-left:21px}
.tab:not(.active):not(.nodiv)::after{content:"";position:absolute;right:0;top:25px;width:3px;height:32px;background:#a8c7fa}
.active{color:#1f1f1f}
.active::before{content:"";position:absolute;left:-1px;top:12px;width:256px;height:68px;background:#fff;border-radius:20px 20px 0 0;z-index:0}
.active::after{content:"";position:absolute;left:-25px;right:-12px;bottom:0;height:24px;background:radial-gradient(circle at 0 0,transparent 24px,#fff 24.500px) 0 0/24px 24px no-repeat,radial-gradient(circle at 24px 0,transparent 24px,#fff 24.500px) 280px 0/24px 24px no-repeat}
.active>*{position:relative;z-index:1}
.plus{width:22px;height:22px;margin:29px 0 0 18px}
.tabmenu{margin:12px 12px 0 auto;width:56px;height:56px;border-radius:20px;background:#ebf1fd;display:flex;align-items:center;justify-content:center}
.tabmenu svg{width:18px;height:12px}

.toolbar{height:96px;flex:none;background:#fff;border-radius:18px 18px 0 0;display:flex;align-items:center;padding:0 12px 4px 32px;font-family:Inter,sans-serif}
.back,.fwd,.rel{width:24px;height:24px}
.fwd{margin-left:48px}
.rel{margin-left:48px}
.omni{margin-left:38px;width:2482px;height:72px;flex:none;border:4px solid #3065cd;border-radius:36px;display:flex;align-items:center;padding-left:20px}
.tune{width:26px;height:24px}
.url{margin-left:26px;font-size:28px;line-height:64px;letter-spacing:-.1px;color:#474747;width:2341px}
.url em{font-style:normal;color:#1f1f1f}
.star{width:30px;height:30px}
.puz{width:34px;height:34px;margin-left:35px}
.tdiv{width:3px;height:32px;background:#d6e1fb;margin-left:33px}
.music{width:30px;height:24px;margin-left:38px}
.avatar{width:40px;height:40px;border-radius:50%;background:#4395a5;color:#fff;font-size:20px;line-height:40px;text-align:center;margin-left:36px}
.update{margin-left:25px;width:353px;height:68px;border-radius:34px;background:#d6e1fb;color:#0b1d49;font-size:26px;line-height:68px;letter-spacing:-.2px;display:flex;align-items:center;padding-left:24px;white-space:nowrap}
.update svg{width:6px;height:28px;fill:#0b1d49;margin-left:24px}
.bookmarks{height:66px;flex:none;background:#fff;border-bottom:2px solid #dfe2e2;display:flex;align-items:flex-start;padding-left:28px;font:24px/47px Inter,sans-serif;letter-spacing:-.6px;color:#444746}
.bg{width:24px;height:24px;margin:12px 16px 0 0}
.bm{width:28px;height:28px;margin:9px 13px 0 39px}
.by{width:32px;height:22px;margin:13px 13px 0 34px}

/* AWS top bar */
.awsbar{height:82px;flex:none;background:#252f3d;border-bottom:2px solid #545b64;display:flex;align-items:center;color:#fff;font-size:24px;font-weight:600;letter-spacing:-.2px}
.awslogo{width:64px;height:40px;margin-left:36px}
.adiv{width:2px;height:44px;background:#414b59}
.a1{margin:0 33px 0 33px}
.grid9{width:32px;height:32px}
.services{margin-left:15px;width:124px;letter-spacing:-.5px}
.awssearch{width:1080px;height:60px;flex:none;background:#17191e;border:3px solid #879596;border-radius:4px;display:flex;align-items:center;padding:0 18px 0 19px;font-size:28px;font-weight:400;color:#95a5a6;letter-spacing:-.4px}
.awssearch svg{width:30px;height:30px;color:#dfe5e5;margin-right:19px}
.awssearch span{margin-left:auto;letter-spacing:-.2px}
.awsicons{display:flex;align-items:center;margin-left:450px}
.ic{width:32px;height:32px;margin-right:33px}
.ic:not(:first-child){margin-left:33px}
.region{display:flex;align-items:center;margin-left:32px;width:180px;letter-spacing:-.3px}
.region svg,.account svg{width:16px;height:14px;margin-left:12px}
.account{display:flex;align-items:center;margin-left:32px;letter-spacing:.1px}

/* page body */
.content{height:1509px;flex:none;display:flex;background:#f1f3f3}
.side{width:512px;flex:none;background:#fff;border-right:2px solid #cdd3d3;overflow:hidden;color:#545b64;letter-spacing:-.35px}
.sidehead{height:113px;display:flex;justify-content:space-between;padding:0 44px 0 54px}
.sidehead b{font-size:36px;line-height:112px;letter-spacing:-1.2px;color:#16191f}
.sidehead svg{width:28px;height:28px;margin-top:48px}
.favs{height:68px;background:#fafafa;border:solid #eaeded;border-width:2px 0;display:flex;align-items:center;justify-content:space-between;padding:4px 66px 0 60px;letter-spacing:-.55px}
.favs svg{width:18px;height:20px}
.side ul{list-style:none;margin:0;padding:15px 0 0 64px}
.side li{height:64px;line-height:64px;white-space:nowrap}
.side li:nth-child(1){letter-spacing:-.85px}
.side li:nth-child(2){margin-top:5px}
.side .m11{margin-top:10.500px}
.side .m30{margin-top:30px}
.grp{font-weight:700;display:flex;align-items:center;letter-spacing:-.55px}
.tr{width:17px;height:20px;margin:0 17px 0 -34px;color:#879596}
.td{width:20px;height:17px;margin:0 15px 0 -35px;color:#879596}
.on{font-weight:700;color:#2e70b8;letter-spacing:-.55px}
.ai{width:32px;height:32px;margin:0 8px 0 18px}
.grp small{font-size:24px;font-weight:600;width:11px}

.main{width:2768px;flex:none;padding:42px 0 0 78px}
.main>*{width:2610px}
.crumbs{display:flex;height:40px;color:#687078;letter-spacing:-.4px}
.crumbs a{color:#2e70b8;line-height:38px;border-bottom:2px solid #2e70b8}
.crumbs svg{width:16px;height:28px;margin:6px 24px 0 25px}
.crumbs b{line-height:38px;letter-spacing:-.75px}
.titlerow{display:flex;justify-content:space-between;height:64px;margin-top:50px}
h1{margin:0;font-size:56px;font-weight:500;line-height:52px;letter-spacing:-.42px;-webkit-text-stroke:.8px #16191f}
.side,dl,.crumbs a,.c2,.c1,.exact,.expired{-webkit-text-stroke:.3px currentColor}
.btns{display:flex;gap:16px}
.btn{height:64px;border:2px solid #545b64;border-radius:4px;background:#fff;color:#545b64;font-weight:700;display:flex;align-items:center;justify-content:center;letter-spacing:-.28px}
.btn svg{width:20px;height:17px;margin-left:22px}
.w1{width:226px}.w2{width:371px}.w3{width:250px}
.primary{width:316px;background:#f19f39;border-color:#f19f39;color:#16191f}
.panel{background:#fff;border-top:2px solid #eaeded;box-shadow:0 0 2px 1px #d0d5d5}
.panel h2{margin:0;font-size:36px;font-weight:700;letter-spacing:-.8px;display:flex;align-items:center}
.details{margin-top:48px;height:735px;border-bottom:2px solid #8a9297}
.details h2{height:128px;background:#fafafa;border-bottom:2px solid #eaeded;padding:0 0 6px 41px}
.details h2 svg{width:19px;height:16px;margin-right:22px}
.cols{display:flex;padding:32px 0 0 40px}
dl{margin:0;height:531px;line-height:43px;width:870px;letter-spacing:-.33px}
dl:first-child{width:831px}
dl+dl{border-left:2px solid #eaeded;padding-left:39.500px}
dt{color:#545b64;margin-bottom:4px;height:44px}
dd{margin:0 0 40px;min-height:44px}
dd:nth-of-type(2):has(.arn){height:88px}
.inf{display:inline-block;margin-left:17px;padding-left:15px;border-left:2px solid #eaeded;line-height:32px;font-size:24px;font-weight:700;color:#2e70b8;letter-spacing:-.5px}
.copy{display:inline-block;width:32px;height:32px;margin:0 16px 0 8px;vertical-align:-6px}
.arn{letter-spacing:.02px;line-height:43px;display:inline-block}
.link{color:#2e70b8}
.tabs{display:flex;height:88px;margin-top:57px;border-bottom:2px solid #aab7b8;font-weight:700;color:#545b64;line-height:60px;letter-spacing:-.8px}
.tabs span{height:60px;padding-left:42px;border-right:2px solid #aab7b8}
.tabs span:nth-child(1){width:243px;letter-spacing:-.95px}
.tabs span:nth-child(2){width:144px}
.tabs span:nth-child(3){width:334px}
.tabs span:nth-child(4){width:252px}
.tabs span:nth-child(5){width:335px}
.tabs span:nth-child(6){width:350px}
.tabs span:last-child{border:0}
.tabs .cur{color:#2e70b8;position:relative}
.cur::after{content:"";position:absolute;left:4px;top:82px;width:237px;height:4px;background:#16191f}
.streams{margin-top:30px;height:346px;background:#fafafa;clip-path:inset(0 -3px 0 -3px);overflow:hidden}
.shead{display:flex;justify-content:space-between;padding:32px 40px 0}
.shead h2{height:59px;white-space:pre;letter-spacing:-.9px}
.shead h2 i{font-weight:400;color:#687078;letter-spacing:-.5px}
.r1{width:100px}.r1 svg{width:34px;height:34px;margin:0}
.r2{width:172px;border-color:#d5dbdb;color:#879596}
.r3{width:325px}.r4{width:385px}
.filter{display:flex;align-items:center;margin-top:25px;height:64px;padding:0 50px 0 40px}
.finput{width:1296px;height:64px;flex:none;border:2px solid #687078;border-radius:4px;background:#fff;display:flex;align-items:center;padding-left:15px;font-style:italic;color:#687078;letter-spacing:.04px}
.finput svg{width:32px;height:32px;margin-right:17px}
.box{width:29px;height:29px;border:2.500px solid #687078;border-radius:4px;background:#fff}
.b1{margin:20px 0 0 40px}
.exact{margin:20px 0 0 15px;width:174px;letter-spacing:-.3px}
.b2{margin:16px 0 0 0}
.expired{margin:16px 0 0 16px;width:171px;letter-spacing:-.6px}
.dinfo{display:flex;align-items:center;color:#2e70b8;border-bottom:3px dashed #2e70b8;height:47px;margin-top:17px;padding-left:9px;width:101px}
.dinfo svg{width:33px;height:33px;margin-right:8px}
.pager{display:flex;align-items:center;margin-left:auto;height:64px}
.pager svg{width:16px;height:28px;color:#aab7b8}
.flip{transform:scaleX(-1)}
.pager b{margin:0 40px;width:16px}
.pager i{width:2px;height:64px;background:#eaeded;margin:0 26px 0 29px}
.pager .pg{width:32px;height:32px;color:#545b64}
.trow{display:flex;align-items:center;height:78px;padding-left:40px;background:#fff}
.thead{background:#fafafa;margin-top:32px;height:80px;border:solid #eaeded;border-width:2px 0;color:#545b64}
.v{width:2px;height:40px;background:#eaeded;margin:0 40px 0 37px}
.none{background:none}
.c1{width:1211px;line-height:78px;overflow:hidden;letter-spacing:-.05px}
.thead b{display:flex;justify-content:space-between;align-items:center;height:40px;line-height:40px;letter-spacing:-.95px}
.thead .c1{border-right:2px solid #545b64;padding-right:28px;letter-spacing:-.85px}
.thead svg{width:21px;height:18px}
.c2{padding-left:40px;width:1211px;color:#16191f;letter-spacing:.42px}
.thead .c2{width:1221px}

.rail{width:80px;height:1500px;flex:none;background:#fff;border-left:2px solid #cdd3d3;color:#545b64}
.rail div{height:82px;border-bottom:2px solid #d5dbdb;padding:24px 0 0 21px}
.rail .hex{border:0}
.rail svg{width:33px;height:33px}

.foot{height:65px;flex:none;background:#252f3d;border-top:2px solid #545b64;display:flex;align-items:center;color:#fff;font-size:24px;padding-left:32px}
.foot svg{width:32px;height:32px}
.f1{margin-left:10px;width:167px}
.f2{width:2012px;letter-spacing:-.3px}
.f3{width:612px;letter-spacing:-.22px}
.f4{width:137px}
.f5{width:119px}
.f6{letter-spacing:-.45px}

/* dock */
.dock{align-self:center;position:relative;width:1920px;height:141px;flex:none;border-radius:44px;background:linear-gradient(#d8c0c5,#f5d7df);border:1.500px solid #efdde1;display:flex;padding:20px 0 0 20px;box-shadow:0 1px 4px rgba(0,0,0,.3)}
.app{position:relative;width:90px;height:90px;margin-right:30px;flex:none;filter:drop-shadow(0 2px 2px rgba(0,0,0,.25))}
.app svg{width:90px;height:90px}
.app .big{width:104px;height:104px;margin:-7px 0 0 -7px}
.dot::after{content:"";position:absolute;left:41px;top:109px;width:8px;height:8px;border-radius:50%;background:#74595f}
.badge{position:absolute;left:61px;top:-11px;width:44px;height:44px;border-radius:50%;background:#e85546;color:#fff;font:26px/44px Inter,sans-serif;text-align:center;letter-spacing:-1px}
.ddiv{width:2px;height:106px;margin:-2px 39px 0 13px;background:#a8949a}
.trash{margin:-9px 0 0 3px;width:80px}
.trash svg{width:80px;height:105px}
```
